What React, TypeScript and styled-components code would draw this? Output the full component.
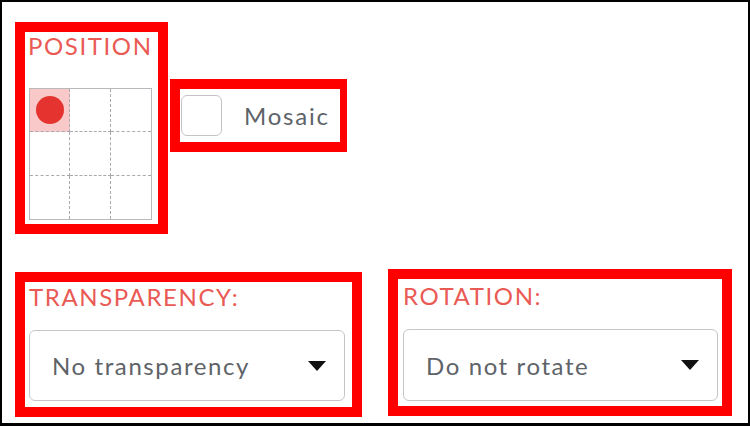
import React, { useState } from 'react';
import styled, { createGlobalStyle } from 'styled-components';

const GlobalStyle = createGlobalStyle`
  body {
    margin: 0;
    background: #fff;
    font-family: Lato, "Open Sans", sans-serif;
  }
`;

const Frame = styled.div`
  width: 750px;
  height: 426px;
  box-sizing: border-box;
  border: 2px solid #000;
  border-bottom-width: 3px;
  background: #fff;
  padding: 20px 0 0 13px;
  display: flex;
  flex-direction: column;
`;

const Row = styled.div<{ $gap: number; $top?: number }>`
  display: flex;
  align-items: flex-start;
  gap: ${p => p.$gap}px;
  margin-top: ${p => p.$top ?? 0}px;
`;

// red annotation frame drawn round each control group
const Marked = styled.div<{ $w: number; $h: number; $top?: number; $right?: number; $padLeft?: number }>`
  width: ${p => p.$w}px;
  height: ${p => p.$h}px;
  box-sizing: border-box;
  border: 10px solid #ff0000;
  border-right-width: ${p => p.$right ?? 10}px;
  margin-top: ${p => p.$top ?? 0}px;
  padding-left: ${p => p.$padLeft ?? 0}px;
  display: flex;
  flex-direction: column;
  align-items: flex-start;
`;

const Label = styled.div<{ $top: number }>`
  color: #ea5a54;
  font-size: 24px;
  font-weight: 400;
  letter-spacing: 1.6px;
  line-height: 24px;
  margin-top: ${p => p.$top}px;
  text-transform: uppercase;
  white-space: nowrap;
`;

const PositionGrid = styled.div`
  margin: 30px 0 0 1px;
  width: 123px;
  height: 132px;
  box-sizing: border-box;
  border: 1px solid #b9b9bd;
  display: grid;
  grid-template-columns: repeat(3, 1fr);
  grid-template-rows: repeat(3, 1fr);
`;

const Cell = styled.button<{ $active: boolean; $col: number; $row: number }>`
  all: unset;
  cursor: pointer;
  display: flex;
  align-items: center;
  justify-content: center;
  background: ${p => (p.$active ? '#f9c8c8' : 'transparent')};
  border-right: ${p => (p.$col < 2 ? '1px dashed #a9a9ad' : 'none')};
  border-bottom: ${p => (p.$row < 2 ? '1px dashed #a9a9ad' : 'none')};
`;

const Dot = styled.span`
  width: 28px;
  height: 28px;
  border-radius: 50%;
  background: #e5342f;
`;

const CheckRow = styled.label`
  display: flex;
  align-items: center;
  gap: 22px;
  height: 100%;
  padding-left: 1px;
  cursor: pointer;
`;

const CheckBox = styled.span<{ $checked: boolean }>`
  width: 41px;
  height: 41px;
  box-sizing: border-box;
  border: 1px solid #c4c4c8;
  border-radius: 6px;
  background: ${p => (p.$checked ? '#e5342f' : '#fff')};
`;

const CheckText = styled.span`
  color: #5e6368;
  font-size: 24px;
  letter-spacing: 1.8px;
  white-space: nowrap;
`;

const Select = styled.div<{ $w: number; $h: number }>`
  width: ${p => p.$w}px;
  height: ${p => p.$h}px;
  margin-top: 21px;
  box-sizing: border-box;
  border: 1px solid #c6c6ca;
  border-radius: 6px;
  padding: 0 18px 0 22px;
  display: flex;
  align-items: center;
  justify-content: space-between;
  color: #5e6368;
  font-size: 24px;
  letter-spacing: 1.6px;
  white-space: nowrap;
  cursor: pointer;
`;

const Caret = () => (
  <svg width="18" height="10" viewBox="0 0 18 10">
    <path d="M0 0h18L9 10z" fill="#111" />
  </svg>
);

export default function App() {
  const [pos, setPos] = useState(0);
  const [mosaic, setMosaic] = useState(false);

  return (
    <>
      <GlobalStyle />
      <Frame>
        <Row $gap={2}>
          <Marked $w={153} $h={212} $padLeft={3}>
            <Label $top={2}>Position</Label>
            <PositionGrid>
              {Array.from({ length: 9 }, (_, i) => (
                <Cell key={i} $active={pos === i} $col={i % 3} $row={Math.floor(i / 3)} onClick={() => setPos(i)}>
                  {pos === i && <Dot />}
                </Cell>
              ))}
            </PositionGrid>
          </Marked>
          <Marked $w={177} $h={73} $top={57} $right={7}>
            <CheckRow onClick={() => setMosaic(!mosaic)}>
              <CheckBox $checked={mosaic} />
              <CheckText>Mosaic</CheckText>
            </CheckRow>
          </Marked>
        </Row>
        <Row $gap={26} $top={35}>
          <Marked $w={347} $h={145} $top={3} $padLeft={4}>
            <Label $top={3}>Transparency:</Label>
            <Select $w={316} $h={71}>
              No transparency
              <Caret />
            </Select>
          </Marked>
          <Marked $w={344} $h={147} $padLeft={5}>
            <Label $top={5}>Rotation:</Label>
            <Select $w={315} $h={72}>
              Do not rotate
              <Caret />
            </Select>
          </Marked>
        </Row>
      </Frame>
    </>
  );
}
